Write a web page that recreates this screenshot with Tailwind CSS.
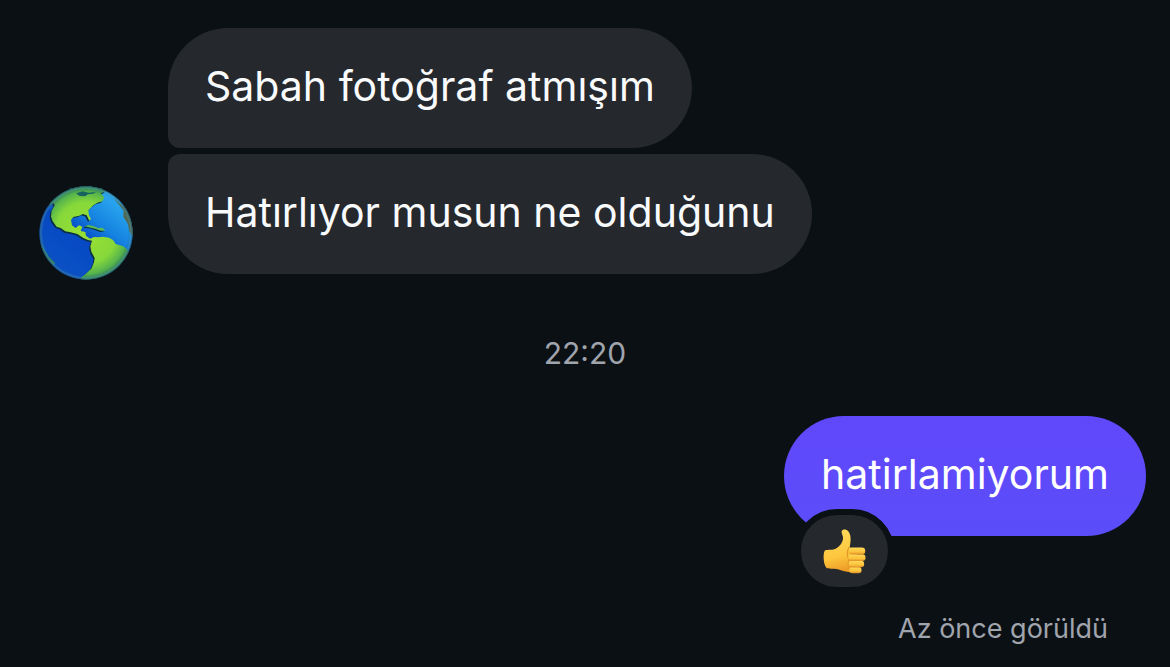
<!DOCTYPE html>
<html lang="tr">
<head>
    <meta charset="UTF-8">
    <meta name="viewport" content="width=device-width, initial-scale=1.0">
    <title>Sohbet</title>
    <script src="https://cdn.jsdelivr.net/npm/@tailwindcss/browser@4"></script>
</head>
<body class="bg-[#0b1014] min-h-screen font-['Inter',sans-serif] text-[#f8fafb]">
    <main class="flex flex-col pt-7 pr-6 pl-[39px]">

        <!-- Gelen mesajlar -->
        <section class="flex items-end gap-[35px]">
            <svg class="size-[94px] shrink-0" viewBox="27 24 282 282" role="img" aria-label="Profil">
                <defs>
                    <linearGradient id="sea" x1="0.85" y1="0.15" x2="0.3" y2="0.85">
                        <stop offset="0" stop-color="#2caaf0"/>
                        <stop offset="0.38" stop-color="#1480df"/>
                        <stop offset="0.62" stop-color="#0648c4"/>
                        <stop offset="1" stop-color="#0a50c4"/>
                    </linearGradient>
                    <radialGradient id="land" gradientUnits="userSpaceOnUse" cx="168" cy="165" r="142">
                        <stop offset="0" stop-color="#9be032"/>
                        <stop offset="0.65" stop-color="#86d83a"/>
                        <stop offset="0.86" stop-color="#57b54c"/>
                        <stop offset="1" stop-color="#2f7d55"/>
                    </radialGradient>
                    <radialGradient id="rim" cx="0.5" cy="0.5" r="0.5">
                        <stop offset="0.9" stop-color="#0a3560" stop-opacity="0"/>
                        <stop offset="0.96" stop-color="#4fa0b8" stop-opacity="0.3"/>
                        <stop offset="1" stop-color="#173c50" stop-opacity="0.9"/>
                    </radialGradient>
                    <clipPath id="disc"><circle cx="168" cy="165" r="140"/></clipPath>
                    <path id="continents" d="M56 76 L64 58 L84 40 L118 26 L164 20 L212 28 L228 40 L212 46 L223 58 L217 70 L202 74 L190 82 L175 97 L177 112 L183 122 L178 128 L170 112 L158 108 L148 113 L130 117 L123 126 L126 142 L137 150 L147 142 L157 146 L152 159 L166 162 L168 173 L180 182 L192 177 L205 178 L219 176 L237 179 L249 186 L257 198 L280 205 L294 216 L312 240 L270 300 L205 314 L150 310 L154 298 L167 288 L184 272 L192 253 L194 240 L184 221 L181 205 L186 188 L174 186 L160 180 L142 168 L122 163 L106 160 L92 150 L80 146 L68 130 L63 116 L65 98 L74 82 L70 74 L60 82 Z"/>
                </defs>
                <g clip-path="url(#disc)">
                    <rect x="27" y="24" width="282" height="282" fill="url(#sea)"/>
                    <use href="#continents" x="-4" y="4" fill="#0b3043"/>
                    <use href="#continents" fill="url(#land)"/>
                    <path d="M138 46 L158 40 L176 44 L198 42 L190 47 L174 49 L165 55 L149 54 Z" fill="#17635f"/>
                    <path d="M160 149 L170 143 L188 146 L202 153 L216 152 L223 160 L210 162 L194 156 L178 151 Z" fill="#0b3043"/>
                    <path d="M164 145 L175 141 L190 144 L204 150 L218 149 L226 158 L212 158 L195 152 Z" fill="#58b959"/>
                    <path d="M250 58 L268 75 L290 92 L309 120 L309 178 L298 160 L294 138 L280 116 L281 98 Z" fill="#54694c"/>
                    <path d="M30 190 L44 216 L56 236 L76 254 L70 262 L40 240 Z" fill="#2b7a62"/>
                    <circle cx="168" cy="165" r="140" fill="url(#rim)"/>
                </g>
            </svg>
            <div class="flex flex-col items-start gap-1.5 pb-1.5 text-[41px] leading-[48px]">
                <p class="bg-[#25282d] rounded-[60px] rounded-bl-xl px-[37px] pt-[34px] pb-[38px]">Sabah fotoğraf atmışım</p>
                <p class="bg-[#25282d] rounded-[60px] rounded-tl-xl px-[37px] pt-[34px] pb-[38px]">Hatırlıyor musun ne olduğunu</p>
            </div>
        </section>

        <time class="self-center pt-[53px] pr-[15px] text-[30px] leading-10 text-[#a0a4ad]">22:20</time>

        <!-- Giden mesaj -->
        <section class="flex flex-col items-end pt-[43px]">
            <div class="relative">
                <p class="bg-linear-to-b from-[#6048fa] to-[#5b4dfa] rounded-[60px] px-[37px] pt-[34px] pb-[38px] text-[41px] leading-[48px] text-white">hatirlamiyorum</p>
                <button type="button" aria-label="Beğeni tepkisi" class="absolute right-[252px] top-[93px] flex h-[84px] w-[99px] items-center justify-center rounded-[42px] border-6 border-[#0b1014] bg-[#25282d]">
                    <svg class="h-[45px] w-[44px]" viewBox="83 84 132 136">
                        <defs>
                            <linearGradient id="skin" x1="0.2" y1="0" x2="0.4" y2="1">
                                <stop offset="0" stop-color="#ffdc5c"/>
                                <stop offset="0.65" stop-color="#fdc63d"/>
                                <stop offset="1" stop-color="#ee9c26"/>
                            </linearGradient>
                            <linearGradient id="finger" x1="0" y1="0" x2="0" y2="1">
                                <stop offset="0" stop-color="#ffdb59"/>
                                <stop offset="0.65" stop-color="#fbc13b"/>
                                <stop offset="1" stop-color="#df8b24"/>
                            </linearGradient>
                        </defs>
                        <path d="M88 149 C99 145 113 149 122 143 C134 135 143 124 143 111 C143 103 138 98 139 91 C141 84 153 84 159 91 C168 102 167 118 163 140 L184 145 L187 211 C175 217 151 215 137 209 C124 203 111 207 94 203 C83 192 82 159 88 149 Z" fill="url(#skin)"/>
                        <path d="M162 139 C154 151 155 165 161 177 C157 189 160 201 168 211" fill="none" stroke="#e39a28" stroke-width="4"/>
                        <rect x="162" y="199" width="37" height="19" rx="9" fill="url(#finger)"/>
                        <rect x="160" y="180" width="47" height="20" rx="10" fill="url(#finger)"/>
                        <rect x="159" y="160" width="52" height="21" rx="10" fill="url(#finger)"/>
                        <rect x="160" y="140" width="50" height="21" rx="10" fill="url(#finger)"/>
                    </svg>
                </button>
            </div>
            <p class="pt-[77px] pr-[38px] text-[27px] leading-8 text-[#a0a4ad]">Az önce görüldü</p>
        </section>
    </main>
</body>
</html>
